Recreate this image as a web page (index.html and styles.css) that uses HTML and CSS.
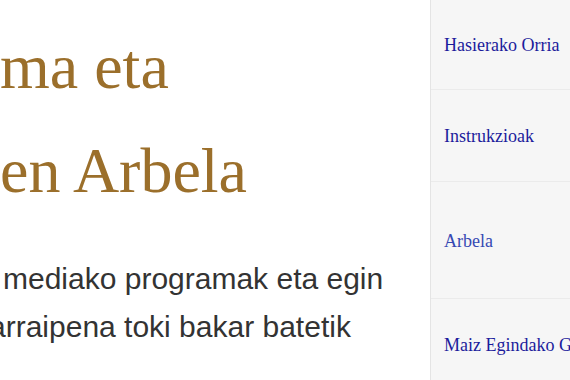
FILE: index.html
```html
<!DOCTYPE html>
<html lang="eu">

<head>
    <meta charset="UTF-8">
    <title>Arbela</title>
    <link rel="stylesheet" href="styles.css">
</head>

<body>
    <div class="container">
        <div class="content">
            <h1 class="title">ma eta<br>en Arbela</h1>
            <p class="lead">
                <span class="line">mediako programak eta egin</span>
                <span class="line shifted">arraipena toki bakar batetik</span>
            </p>
        </div>
        <div class="sidebar">
            <ul class="menu">
                <li class="menu-item"><a href="#" class="menu-link">Hasierako Orria</a></li>
                <li class="menu-item"><a href="#" class="menu-link">Instrukzioak</a></li>
                <li class="menu-item active"><a href="#" class="menu-link">Arbela</a></li>
                <li class="menu-item"><a href="#" class="menu-link">Maiz Egindako Galderak</a></li>
            </ul>
        </div>
    </div>
</body>

</html>
```

FILE: styles.css
```css
    body {
        margin: 0;
        font-family: "Liberation Sans", Arial, sans-serif;
        background-color: #fff;
        overflow: hidden;
    }

    .container {
        display: flex;
        height: 100vh;
    }

    .content {
        width: 430px;
        flex: none;
        white-space: nowrap;
        overflow: hidden;
    }

    .title {
        margin: 15px 0 0 0;
        font-family: "Liberation Serif", "Times New Roman", serif;
        font-weight: normal;
        font-size: 64px;
        line-height: 104px;
        color: #9b6f2b;
    }

    .lead {
        margin: 32px 0 0 3px;
        font-size: 30px;
        line-height: 48px;
        color: #333;
    }

    .lead .line {
        display: block;
    }

    /* 第二行居中后左边被裁掉一点 */
    .lead .shifted {
        margin-left: -14px;
    }

    .sidebar {
        flex: 1;
        background-color: #f6f6f6;
        border-left: 1px solid #e4e4e4;
        overflow: hidden;
    }

    .menu {
        list-style-type: none;
        margin: 0;
        padding: 0;
    }

    .menu-item {
        padding: 35px 14px 34px 13px;
        border-bottom: 1px solid #ebebeb;
        white-space: nowrap;
        font-family: "Liberation Serif", "Times New Roman", serif;
        font-size: 18px;
        line-height: 22px;
    }

    .menu-item:first-child {
        padding-top: 34px;
        padding-bottom: 33px;
    }

    .menu-item.active {
        padding-top: 48px;
        padding-bottom: 46px;
    }

    .menu-link {
        /* 去掉下划线 */
        text-decoration: none;
        color: #1c1c9c;
    }

    .menu-item.active .menu-link {
        color: #3649b3;
    }
```
